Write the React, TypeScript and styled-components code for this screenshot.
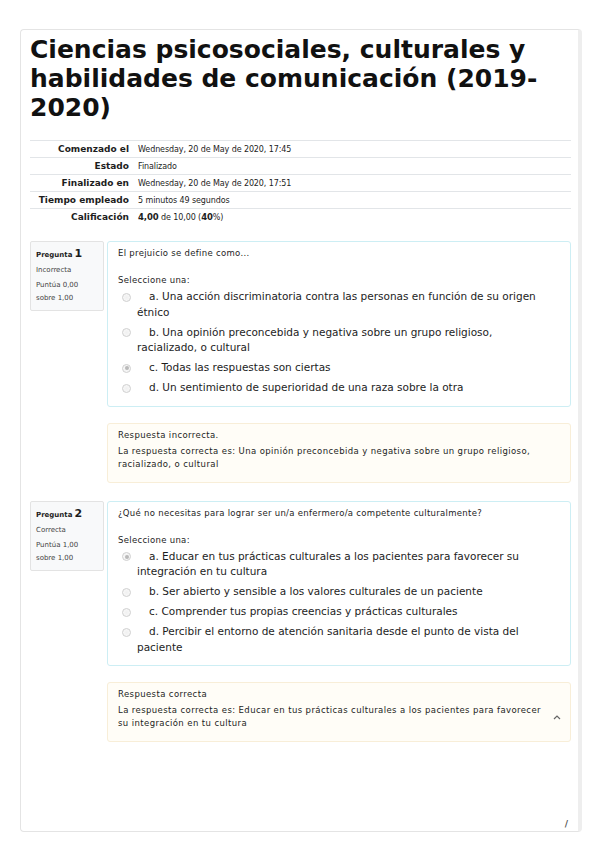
import * as React from 'react';
import styled, { createGlobalStyle } from 'styled-components';

const GlobalStyle = createGlobalStyle`
  html, body {
    margin: 0;
    padding: 0;
    background: #ffffff;
  }
  body {
    font-family: "DejaVu Sans", Verdana, sans-serif;
    color: #1d1d1d;
  }
  * {
    box-sizing: border-box;
  }
`;

const Page = styled.div`
  padding: 29px 17px 16px 20px;
`;

const Card = styled.div`
  display: flex;
  flex-direction: column;
  min-height: 803px;
  border: 1px solid #e4e4e4;
  border-right: 4px solid #eeeeee;
  border-radius: 4px;
  padding: 5px 7px 0 9px;
`;

const Title = styled.h1`
  margin: 0;
  font-size: 25px;
  line-height: 29px;
  font-weight: bold;
  color: #111;
`;

const Summary = styled.div`
  margin-top: 18px;
`;

const SummaryRow = styled.div`
  display: grid;
  grid-template-columns: 99px 1fr;
  column-gap: 9px;
  align-items: center;
  height: 17px;
  border-top: 1px solid #e2e5e8;
`;

const SummaryLabel = styled.div`
  text-align: right;
  font-size: 9px;
  font-weight: bold;
`;

const SummaryValue = styled.div`
  font-size: 8px;
  letter-spacing: -0.1px;
  b {
    font-size: 8.5px;
  }
`;

const Question = styled.div<{ $first?: boolean }>`
  display: grid;
  grid-template-columns: 74px 1fr;
  column-gap: 3px;
  align-items: start;
  margin-top: ${(p) => (p.$first ? '16px' : '18px')};
`;

const Info = styled.div`
  background: #f8f9fa;
  border: 1px solid #e3e3e3;
  border-radius: 2px;
  padding: 5px 4px 5px 5px;
`;

const InfoHead = styled.div`
  font-size: 7px;
  font-weight: bold;
  line-height: 14px;
  span {
    font-size: 11px;
    margin-left: 2px;
  }
`;

const InfoState = styled.div`
  font-size: 7px;
  line-height: 12px;
  margin-top: 2px;
  color: #444;
`;

const InfoGrade = styled.div`
  font-size: 7px;
  line-height: 13px;
  margin-top: 3px;
  color: #444;
`;

const Main = styled.div`
  display: flex;
  flex-direction: column;
  gap: 16px;
`;

const Formulation = styled.div`
  border: 1px solid #cdeef4;
  border-radius: 3px;
  background: #ffffff;
  padding: 5px 16px 10px 10px;
`;

const QText = styled.div`
  font-size: 8.5px;
  line-height: 12px;
  letter-spacing: 0.3px;
`;

const Prompt = styled.div`
  font-size: 8.5px;
  line-height: 12px;
  letter-spacing: 0.3px;
  margin-top: 15px;
`;

const Answers = styled.div`
  margin-top: 3px;
  display: flex;
  flex-direction: column;
  gap: 4.5px;
`;

const Option = styled.div`
  display: flex;
  align-items: flex-start;
  padding-left: 4px;
`;

const Radio = styled.span<{ $checked?: boolean }>`
  flex: none;
  width: 9px;
  height: 9px;
  margin-top: 3.5px;
  border-radius: 50%;
  border: 1px solid #cfcfcf;
  background: radial-gradient(circle, #f0f0f0 0%, #fafafa 100%);
  display: flex;
  align-items: center;
  justify-content: center;
  &::after {
    content: '';
    display: ${(p) => (p.$checked ? 'block' : 'none')};
    width: 4px;
    height: 4px;
    border-radius: 50%;
    background: #b9b9b9;
  }
`;

const OptionLabel = styled.div`
  flex: 1;
  margin-left: 6px;
  text-indent: 12px;
  font-size: 10.5px;
  line-height: 15.5px;
`;

const Feedback = styled.div`
  display: flex;
  align-items: flex-end;
  background: #fffdf7;
  border: 1px solid #f8eed8;
  border-radius: 3px;
  padding: 5px 10px 11px 10px;
`;

const FeedbackBody = styled.div`
  flex: 1;
`;

const FeedbackLine = styled.div`
  font-size: 8.5px;
  line-height: 13px;
  letter-spacing: 0.4px;
  & + & {
    margin-top: 3px;
  }
`;

const Toggle = styled.span`
  flex: none;
  width: 8px;
  margin: 0 -1px 10px 12px;
  display: flex;
`;

const PageMark = styled.div`
  margin-top: auto;
  text-align: right;
  padding: 0 3px 2px 0;
  font-size: 9px;
  font-weight: bold;
  color: #555;
  line-height: 10px;
`;

type Opt = { text: string; checked?: boolean };

type Q = {
  no: number;
  state: string;
  grade: string;
  text: string;
  options: Opt[];
  feedback: string[];
  toggle?: boolean;
};

const questions: Q[] = [
  {
    no: 1,
    state: 'Incorrecta',
    grade: '0,00',
    text: 'El prejuicio se define como...',
    options: [
      { text: 'a. Una acción discriminatoria contra las personas en función de su origen étnico' },
      { text: 'b. Una opinión preconcebida y negativa sobre un grupo religioso, racializado, o cultural' },
      { text: 'c. Todas las respuestas son ciertas', checked: true },
      { text: 'd. Un sentimiento de superioridad de una raza sobre la otra' },
    ],
    feedback: [
      'Respuesta incorrecta.',
      'La respuesta correcta es: Una opinión preconcebida y negativa sobre un grupo religioso, racializado, o cultural',
    ],
  },
  {
    no: 2,
    state: 'Correcta',
    grade: '1,00',
    text: '¿Qué no necesitas para lograr ser un/a enfermero/a competente culturalmente?',
    options: [
      { text: 'a. Educar en tus prácticas culturales a los pacientes para favorecer su integración en tu cultura', checked: true },
      { text: 'b. Ser abierto y sensible a los valores culturales de un paciente' },
      { text: 'c. Comprender tus propias creencias y prácticas culturales' },
      { text: 'd. Percibir el entorno de atención sanitaria desde el punto de vista del paciente' },
    ],
    feedback: [
      'Respuesta correcta',
      'La respuesta correcta es: Educar en tus prácticas culturales a los pacientes para favorecer su integración en tu cultura',
    ],
    toggle: true,
  },
];

const summary: [string, React.ReactNode][] = [
  ['Comenzado el', 'Wednesday, 20 de May de 2020, 17:45'],
  ['Estado', 'Finalizado'],
  ['Finalizado en', 'Wednesday, 20 de May de 2020, 17:51'],
  ['Tiempo empleado', '5 minutos 49 segundos'],
  [
    'Calificación',
    <>
      <b>4,00</b> de 10,00 (<b>40</b>%)
    </>,
  ],
];

const Chevron = () => (
  <svg width="8" height="5" viewBox="0 0 8 5">
    <path d="M1 4 L4 1 L7 4" fill="none" stroke="#666" strokeWidth="1.2" />
  </svg>
);

export default function App() {
  return (
    <>
      <GlobalStyle />
      <Page>
        <Card>
          <Title>Ciencias psicosociales, culturales y habilidades de comunicación (2019-2020)</Title>

          <Summary>
            {summary.map(([label, value]) => (
              <SummaryRow key={label}>
                <SummaryLabel>{label}</SummaryLabel>
                <SummaryValue>{value}</SummaryValue>
              </SummaryRow>
            ))}
          </Summary>

          {questions.map((q) => (
            <Question key={q.no} $first={q.no === 1}>
              <Info>
                <InfoHead>
                  Pregunta<span>{q.no}</span>
                </InfoHead>
                <InfoState>{q.state}</InfoState>
                <InfoGrade>
                  Puntúa {q.grade}
                  <br />
                  sobre 1,00
                </InfoGrade>
              </Info>

              <Main>
                <Formulation>
                  <QText>{q.text}</QText>
                  <Prompt>Seleccione una:</Prompt>
                  <Answers>
                    {q.options.map((o) => (
                      <Option key={o.text}>
                        <Radio $checked={o.checked} />
                        <OptionLabel>{o.text}</OptionLabel>
                      </Option>
                    ))}
                  </Answers>
                </Formulation>

                <Feedback>
                  <FeedbackBody>
                    {q.feedback.map((line) => (
                      <FeedbackLine key={line}>{line}</FeedbackLine>
                    ))}
                  </FeedbackBody>
                  {q.toggle && (
                    <Toggle>
                      <Chevron />
                    </Toggle>
                  )}
                </Feedback>
              </Main>
            </Question>
          ))}

          <PageMark>/</PageMark>
        </Card>
      </Page>
    </>
  );
}
